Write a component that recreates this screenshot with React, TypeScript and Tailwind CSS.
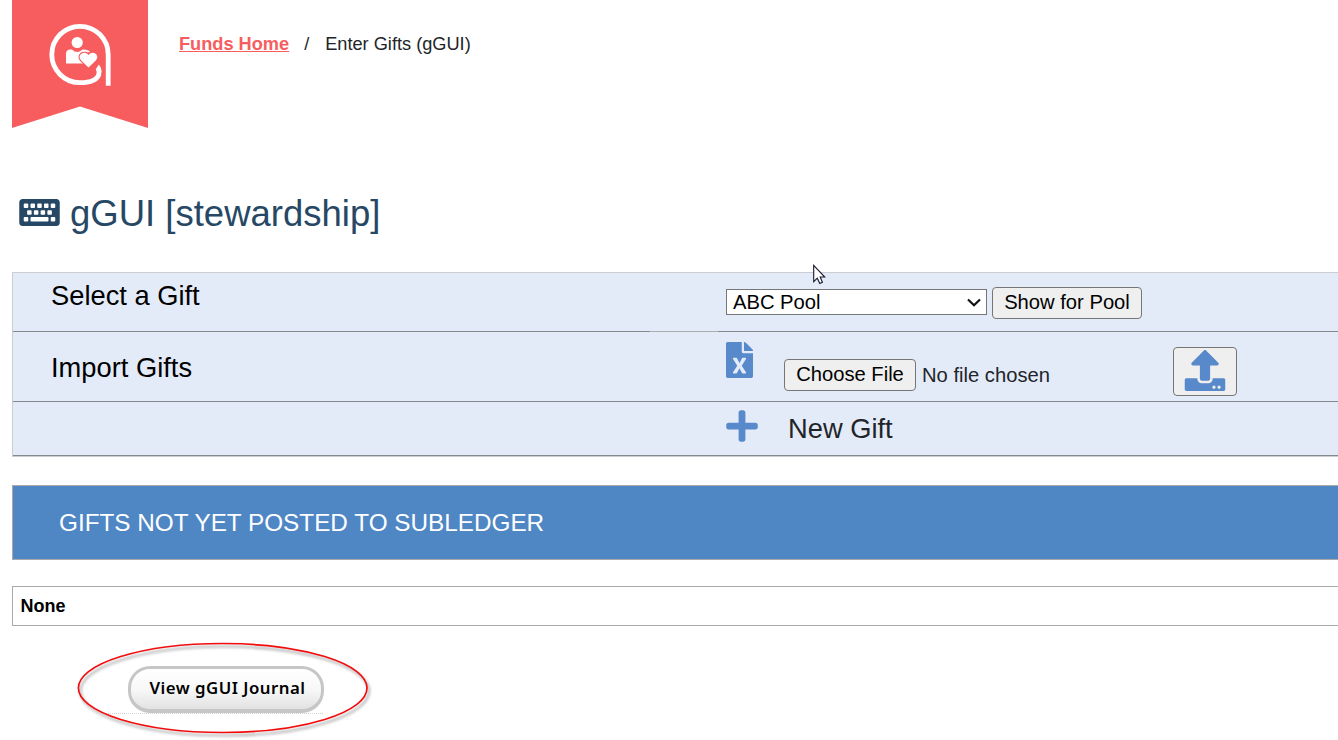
import React from 'react';
import { FaFileExcel, FaKeyboard, FaPlus, FaUpload } from 'react-icons/fa';

const Logo: React.FC = () => (
  <svg className="block h-32 w-[136px] flex-shrink-0" viewBox="0 0 136 128">
    <path d="M0 0H136V128L68 106.5L0 128Z" fill="#f75d5f" />
    <path
      d="M96.2 85.8V54.5A28.2 28.2 0 1 0 68 82.7C78 82.7 87 79.8 87 72.5V70"
      fill="none"
      stroke="#fff"
      strokeWidth="4.8"
    />
    <path d="M83.8 69.2L86.9 64.6Q89.5 67.5 89.4 72L86 73.5Z" fill="#fff" />
    <circle cx="65.2" cy="42.5" r="5.6" fill="#fff" />
    <path d="M54 63.5V54Q54 49.5 58.5 49.5H60Q65 54.5 70.5 49.5H72Q75 49.5 76 52L72 63.5Z" fill="#fff" />
    <path
      d="M76.5 67.4L69.2 60.4C64.5 55.4 72 49.4 76.5 55C81 49.4 88.5 55.4 83.8 60.4Z"
      fill="#fff"
      stroke="#f75d5f"
      strokeWidth="2.4"
      paintOrder="stroke"
    />
    <path d="M70.5 51.5Q74.5 49.2 77.5 52" fill="none" stroke="#fff" strokeWidth="1.3" />
  </svg>
);

const Cursor: React.FC = () => (
  <svg className="absolute left-[813px] top-[264px] h-[21px] w-[13px]" viewBox="0 0 13 21">
    <path
      d="M.7 1.4V17.6L4.3 14.2L6.8 19.4L9.4 18.2L7.2 13H11.8Z"
      fill="#fff"
      stroke="#15182a"
      strokeWidth="1.1"
    />
  </svg>
);

const App: React.FC = () => {
  return (
    <div className="relative h-[740px] w-full overflow-hidden bg-white pl-3 font-['Liberation_Sans',Arial,sans-serif] text-[#212529]">
      <header className="flex">
        <Logo />
        <nav className="ml-[31px] flex pt-[31px] text-[18.2px] leading-[26px]">
          <a href="#" className="font-bold text-[#f75d5f] underline">Funds Home</a>
          <span className="ml-[15px]">/</span>
          <span className="ml-4">Enter Gifts (gGUI)</span>
        </nav>
      </header>

      <h1 className="mt-[62px] flex h-12 items-center pl-[7px] text-[36.5px] text-[#264865]">
        <FaKeyboard className="h-9 w-[41px] -translate-y-[1.5px]" />
        <span className="ml-[10px]">gGUI [stewardship]</span>
      </h1>

      <section className="mt-[34px] border-b border-l border-t border-[#cbcdd3] bg-[#e4ebf8] text-[27.3px]">
        <div className="flex h-[58px]">
          <div className="w-[713px] pl-[38px] pt-[3px] text-black">Select a Gift</div>
          <div className="flex gap-[5px] pt-[14px] text-[20.2px] text-black">
            <div className="mt-[2px] flex h-[26px] w-[261px] items-center justify-between border border-[#767676] bg-white pl-[6px] pr-[5px]">
              <span>ABC Pool</span>
              <svg className="h-[9px] w-[14px]" viewBox="0 0 14 9">
                <path d="M1 1.5L7 7.3L13 1.5" fill="none" stroke="#111" strokeWidth="2.2" />
              </svg>
            </div>
            <button className="h-8 w-[150px] rounded-[4px] border border-[#767676] bg-[#efefef] pb-[2px] leading-[26px]">Show for Pool</button>
          </div>
        </div>
        <div className="flex h-px">
          <div className="w-[637px] bg-[#84888f]" />
          <div className="w-[68px] bg-[#a9acb0]" />
          <div className="flex-1 bg-[#84888f]" />
        </div>

        <div className="flex h-[70px] border-b border-[#84888f]">
          <div className="w-[713px] pl-[38px] pt-4 text-black">Import Gifts</div>
          <FaFileExcel className="mt-[10px] h-9 w-[27px] text-[#5789cb]" />
          <div className="ml-[31px] flex pt-[27px] text-[20.2px]">
            <button className="h-8 w-[132px] rounded-[4px] border border-[#767676] bg-[#efefef] pb-[2px] leading-[26px] text-black">Choose File</button>
            <span className="ml-[6px] leading-8">No file chosen</span>
          </div>
          <button className="ml-[123px] mt-[15px] flex h-[49px] w-16 items-center justify-center rounded-[4px] border border-[#767676] bg-[#efefef]">
            <FaUpload className="h-[41px] w-[41px] -translate-y-[1px] translate-x-[0.5px] text-[#5789cb]" />
          </button>
        </div>

        <div className="flex h-[54px] border-b border-[#84888f] pl-[713px]">
          <FaPlus className="mt-[6px] h-9 w-8 text-[#5789cb]" />
          <span className="ml-[30px] pt-[7px]">New Gift</span>
        </div>
      </section>

      <h2 className="mt-7 flex h-[75px] items-center border-y border-l border-[#a9a9a9] bg-[#4f87c5] pl-[46px] pt-[2px] text-[24.3px] text-white">
        GIFTS NOT YET POSTED TO SUBLEDGER
      </h2>

      <div className="mt-[26px] flex h-10 items-center border-y border-l border-[#a9a9a9] pl-[7.5px] text-[18px] font-bold text-black">
        None
      </div>

      <div className="ml-[116px] mt-[40px] w-[196px]">
        <button className="h-[47px] w-full rounded-[22px] border-[3px] border-b-4 border-[#c6c6c6] bg-gradient-to-b from-white via-[#f8f8f8] to-[#e2e2e2] pb-[2px] pl-[3px] font-['Noto_Sans','Open_Sans',sans-serif] text-[16.8px] font-semibold tracking-[0.5px] text-black">
          View gGUI Journal
        </button>
      </div>

      {/* dotted row edge and the red highlight around the journal button */}
      <svg className="pointer-events-none absolute left-[70px] top-[635px] h-[105px] w-[310px]" viewBox="0 0 310 105">
        <path d="M38 78.5H254" stroke="#d2d2d2" strokeDasharray="1 1" />
        <ellipse cx="152.7" cy="53" rx="144.3" ry="44.5" fill="none" stroke="#f20d0d" strokeWidth="1.7" className="drop-shadow-[2px_3px_1.5px_rgba(0,0,0,0.4)]" />
      </svg>
      <Cursor />
    </div>
  );
};

export default App;
